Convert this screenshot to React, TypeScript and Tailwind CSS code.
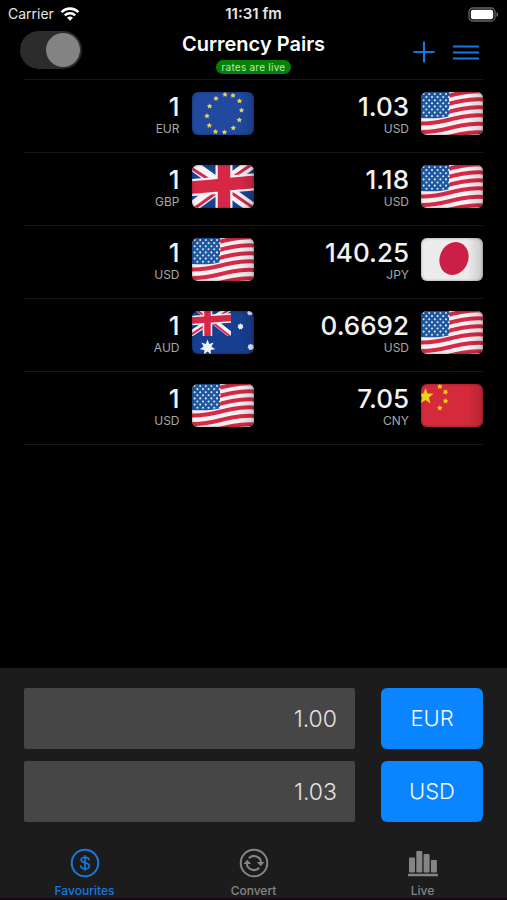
import { useState, type ReactNode } from "react"

const tabs = [
  { id: "favourites", label: "Favourites", icon: <DollarIcon /> },
  { id: "convert", label: "Convert", icon: <ConvertIcon /> },
  { id: "live", label: "Live", icon: <BarsIcon /> },
]

const pairs = [
  { from: "EUR", to: "USD", rate: "1.03" },
  { from: "GBP", to: "USD", rate: "1.18" },
  { from: "USD", to: "JPY", rate: "140.25" },
  { from: "AUD", to: "USD", rate: "0.6692" },
  { from: "USD", to: "CNY", rate: "7.05" },
]

function star(cx: number, cy: number, r: number, points = 5, inner = 0.42, turn = 0) {
  const out: string[] = []
  for (let i = 0; i < points * 2; i++) {
    const a = (Math.PI * i) / points - Math.PI / 2 + turn
    const d = i % 2 ? r * inner : r
    out.push(`${(cx + d * Math.cos(a)).toFixed(2)},${(cy + d * Math.sin(a)).toFixed(2)}`)
  }
  return out.join(" ")
}

function UsFlag() {
  const stars: ReactNode[] = []
  for (let row = 0; row < 8; row++) {
    for (let col = 0; col < 5; col++) {
      const x = 2.6 + col * 5.6 + (row % 2 ? 2.8 : 0)
      stars.push(<circle key={`${row}-${col}`} cx={x} cy={2 + row * 3.1} r="1.05" />)
    }
  }
  return (
    <>
      <rect width="62" height="43" fill="#f6f1f3" />
      <g fill="none" stroke="#d42a45" strokeWidth="4">
        {[-1, 7, 15, 23, 31, 39.5, 48, 56].map((y) => (
          <path key={y} d={`M-1 ${y + 0.5} C18 ${y + 1} 28 ${y - 4} 40 ${y - 6} C48 ${y - 7.5} 56 ${y - 8} 63 ${y - 7.5}`} />
        ))}
      </g>
      <path d="M0 0H28V24.5C19 26.5 10 26.5 0 26Z" fill="#1f589f" />
      <g fill="#dbe8f6">{stars}</g>
    </>
  )
}

function EuFlag() {
  const spots = [
    [33, 2.5], [41, 3.5], [47.5, 9], [49.5, 18.3], [47.3, 28], [41.3, 36],
    [32.5, 40.2], [23.5, 39.7], [17.3, 33.5], [15, 24], [17.6, 14.3], [24, 6.5],
  ]
  return (
    <>
      <rect width="62" height="43" fill="#2149a0" />
      {spots.map(([x, y]) => (
        <polygon key={x} points={star(x, y, 2.8, 5, 0.55)} fill="#e5cf56" />
      ))}
    </>
  )
}

function GbFlag() {
  return (
    <>
      <rect width="62" height="43" fill="#17438f" />
      <path d="M-4 -3L66 47M66 -6L-4 45" stroke="#f5f3f7" strokeWidth="11" />
      <path d="M-4 1L30 23M34 17L66 -5M34 24L66 46M28 25L-4 48" stroke="#d32a48" strokeWidth="3" />
      <path d="M32 -1V44M-1 22.5C16 22 43 18 63 17" fill="none" stroke="#f5f3f7" strokeWidth="17" />
      <path d="M32 -1V44M-1 22.5C16 22 43 18 63 17" fill="none" stroke="#d62846" strokeWidth="12.5" />
    </>
  )
}

function JpFlag() {
  return (
    <>
      <rect width="62" height="43" fill="#ececec" />
      <ellipse cx="33" cy="20.5" rx="14.2" ry="16.8" fill="#cc1f48" transform="rotate(22 33 20.5)" />
    </>
  )
}

function AuFlag() {
  return (
    <>
      <rect width="62" height="43" fill="#173f91" />
      <svg width="39" height="25" viewBox="0 0 39 25">
        <path d="M-3 -9L39 24M-6 26L38 -3" stroke="#f5f3f7" strokeWidth="6" />
        <path d="M-3 -7L39 26M-6 27L38 -2" stroke="#d32a48" strokeWidth="2" />
        <path d="M15.5 0V25M0 9.5L39 7" stroke="#f5f3f7" strokeWidth="9.5" />
        <path d="M15.5 0V25M0 9.5L39 7" stroke="#d62846" strokeWidth="6.5" />
      </svg>
      <g fill="#eef3fa">
        <polygon points={star(15.5, 36.5, 8, 7, 0.5)} />
        <polygon points={star(48.5, 15.5, 3.2, 7, 0.7)} />
        <polygon points={star(58.8, 36, 3.6, 7, 0.7)} />
        <polygon points={star(58, 1.5, 3.2, 7, 0.7)} />
      </g>
    </>
  )
}

function CnFlag() {
  return (
    <>
      <rect width="62" height="43" fill="#d52a3b" />
      <g fill="#f2d21b">
        <polygon points={star(4.5, 12.5, 8.5, 5, 0.42)} />
        <polygon points={star(18.8, 2.5, 3, 5, 0.5)} />
        <polygon points={star(24.5, 8, 3, 5, 0.5, 0.4)} />
        <polygon points={star(24.5, 17, 3, 5, 0.5, 0.2)} />
        <polygon points={star(18.8, 24, 3, 5, 0.5)} />
      </g>
    </>
  )
}

const flags: Record<string, () => ReactNode> = {
  EUR: EuFlag,
  GBP: GbFlag,
  USD: UsFlag,
  JPY: JpFlag,
  AUD: AuFlag,
  CNY: CnFlag,
}

function Flag({ code }: { code: string }) {
  const Drawing = flags[code]
  return (
    <div className="relative h-[43px] w-[62px] shrink-0 overflow-hidden rounded-md">
      <svg viewBox="0 0 62 43" className="block h-full w-full" aria-hidden="true">
        <Drawing />
      </svg>
      <div className="absolute inset-0 rounded-md bg-linear-to-r from-transparent via-transparent via-75% to-black/15 shadow-[inset_0_0_3px_rgba(0,0,0,0.4)]" />
    </div>
  )
}

function Amount({ value, code }: { value: string; code: string }) {
  return (
    <div className="flex items-start justify-end gap-3">
      <div className="text-right">
        <div className="text-[26px] leading-[30px] font-medium text-[#f2f2f2]">{value}</div>
        <div className="text-xs leading-[14px] text-[#a8a8a8]">{code}</div>
      </div>
      <Flag code={code} />
    </div>
  )
}

function DollarIcon() {
  return (
    <svg viewBox="0 0 30 30" className="size-[30px]" fill="none" stroke="currentColor" strokeLinecap="round" aria-hidden="true">
      <circle cx="15" cy="15" r="13.3" strokeWidth="2" />
      <path d="M19 11.8C18.8 9.9 17.2 9.2 15 9.2C12.7 9.2 11.2 10.2 11.2 11.9C11.2 15.9 19.2 13.7 19.2 17.9C19.2 19.8 17.5 20.8 15 20.8C12.6 20.8 11 19.8 10.8 17.9M15 7.8V22.2" strokeWidth="1.6" />
    </svg>
  )
}

function ConvertIcon() {
  return (
    <svg viewBox="0 0 30 30" className="size-[30px]" fill="none" stroke="currentColor" aria-hidden="true">
      <circle cx="15" cy="15" r="13.3" strokeWidth="2" />
      <path d="M9.8 10.2A7.2 7.2 0 0 1 22.2 15M20.2 19.8A7.2 7.2 0 0 1 7.8 15" strokeWidth="2" />
      <path d="M17.9 14H25.5L21.7 18.2ZM4.5 16H12.1L8.3 11.8Z" fill="currentColor" stroke="none" />
    </svg>
  )
}

function BarsIcon() {
  return (
    <svg viewBox="0 0 30 30" className="size-[30px]" fill="currentColor" aria-hidden="true">
      <rect x="1" y="9.5" width="6" height="15" rx="1" />
      <rect x="8.3" y="3" width="6" height="21.5" rx="1" />
      <rect x="15.6" y="6" width="6" height="18.5" rx="1" />
      <rect x="22.9" y="12" width="6" height="12.5" rx="1" />
      <rect x="0" y="25.8" width="30" height="2.4" rx="0.5" />
    </svg>
  )
}

function StatusBar() {
  return (
    <div className="grid h-7 grid-cols-3 items-center px-2 text-sm text-[#e6e6e6]">
      <div className="flex items-center gap-1.5">
        Carrier
        <svg viewBox="0 0 20 14" className="h-[14px] w-5" fill="none" stroke="#fff" strokeWidth="2.6" aria-hidden="true">
          <path d="M1.6 5.1C6.2 0.5 13.8 0.5 18.4 5.1" />
          <path d="M4.8 8.4C7.7 5.6 12.3 5.6 15.2 8.4" />
          <path d="M10 13.8L7 10.7C8.7 9.1 11.3 9.1 13 10.7Z" fill="#fff" stroke="none" />
        </svg>
      </div>
      <div className="text-center text-[15px] font-semibold">11:31 fm</div>
      <svg viewBox="0 0 31 15" className="h-[15px] w-[31px] justify-self-end" aria-hidden="true">
        <rect x="1" y="1" width="26" height="13" rx="4" fill="none" stroke="#666" strokeWidth="1.3" />
        <rect x="2.8" y="2.8" width="22.4" height="9.4" rx="2.2" fill="#fff" />
        <path d="M28.5 5.2C30.5 6 30.5 9 28.5 9.8Z" fill="#777" />
      </svg>
    </div>
  )
}

export default function App() {

  const [activeTab, setActiveTab] = useState("favourites")
  const [enabled, setEnabled] = useState(true)

  return (
    <div className="flex min-h-screen flex-col bg-black font-[Inter,sans-serif] text-white">
      <StatusBar />

      <header className="grid h-[51px] grid-cols-[1fr_auto_1fr] items-start px-5">
        <label className="relative mt-[3px] h-[38px] w-[62px] cursor-pointer">
          <input
            type="checkbox"
            role="switch"
            aria-label="Live rates"
            checked={enabled}
            onChange={(e) => setEnabled(e.target.checked)}
            className="peer block h-full w-full cursor-pointer appearance-none rounded-full bg-[#2c2c2c]"
          />
          <span className="pointer-events-none absolute top-[2px] left-[2px] size-[34px] rounded-full bg-[#838383] transition-transform peer-checked:translate-x-6" />
        </label>
        <div className="flex flex-col items-center gap-1">
          <h1 className="pt-1 text-xl leading-6 font-semibold">Currency Pairs</h1>
          <span className="rounded-full bg-[#058205] px-1.5 text-[10px] leading-[14px] tracking-wide text-[#b9e6b9]">rates are live</span>
        </div>
        <div className="mt-3 flex justify-end gap-4 pr-[7px] text-[#1279e6]">
          <button type="button" aria-label="Add pair" className="cursor-pointer">
            <svg viewBox="0 0 24 24" className="size-6" stroke="currentColor" strokeWidth="2" aria-hidden="true">
              <path d="M1.5 12H22.5M12 1.5V22.5" />
            </svg>
          </button>
          <button type="button" aria-label="Menu" className="cursor-pointer">
            <svg viewBox="0 0 28 24" className="h-6 w-7" stroke="currentColor" strokeWidth="2" aria-hidden="true">
              <path d="M1 6.5H27M1 12.5H27M1 18.5H27" />
            </svg>
          </button>
        </div>
      </header>

      <ul className="mx-6 flex-1 border-t border-[#161616]">
        {pairs.map((pair, i) => (
          <li key={i} className="grid h-[73px] grid-cols-2 border-b border-[#161616] pt-3">
            <Amount value="1" code={pair.from} />
            <Amount value={pair.rate} code={pair.to} />
          </li>
        ))}
      </ul>

      <section className="flex flex-col gap-3 bg-[#1c1c1c] px-6 pt-5">
        {[["EUR", "1.00"], ["USD", "1.03"]].map(([code, amount]) => (
          <div key={code} className="flex gap-[26px]">
            <input
              type="text"
              inputMode="decimal"
              aria-label={`Amount in ${code}`}
              defaultValue={amount}
              className="h-[61px] min-w-0 flex-1 rounded-xs bg-[#464646] px-[18px] text-right text-[23px] font-light text-[#e2e2e2]"
            />
            <button type="button" className="h-[61px] w-[102px] cursor-pointer rounded-md bg-[#0a84ff] text-[22px] font-light text-[#f2f8ff]">
              {code}
            </button>
          </div>
        ))}
      </section>

      <nav className="grid h-[78px] grid-cols-3 border-b-2 border-[#120a0e] bg-[#1c1c1c] pt-[26px]">
        {tabs.map((tab) => (
          <button
            key={tab.id}
            type="button"
            onClick={() => setActiveTab(tab.id)}
            className={`flex cursor-pointer flex-col items-center gap-[5px] text-xs leading-4 font-medium ${activeTab === tab.id ? "text-[#167be0]" : "text-[#858585]"}`}
          >
            {tab.icon}
            {tab.label}
          </button>
        ))}
      </nav>
    </div>
  )
}
